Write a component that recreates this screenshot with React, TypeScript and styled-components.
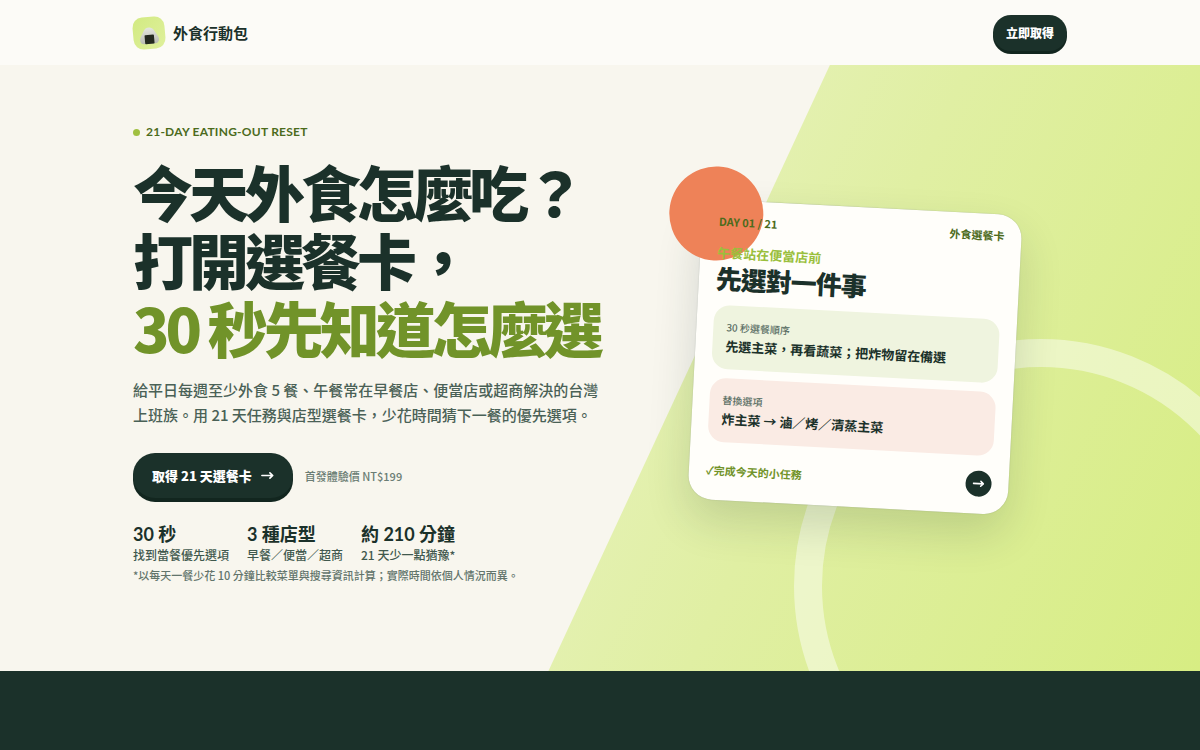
import React from 'react';
import styled, { createGlobalStyle } from 'styled-components';

const ink = '#1b312a';
const cjk = `'Noto Sans CJK TC', 'Noto Sans', sans-serif`;
const latin = `Lato, 'Noto Sans CJK TC', sans-serif`;

const GlobalStyle = createGlobalStyle`
  *, *::before, *::after { box-sizing: border-box; }
  body {
    margin: 0;
    background: ${ink};
    color: ${ink};
    font-family: ${cjk};
    -webkit-font-smoothing: antialiased;
  }
  h1, h2, p, dl, dt, dd { margin: 0; }
`;

const Container = styled.div`
  width: 100%;
  max-width: 974px;
  margin: 0 auto;
  padding: 0 20px;
`;

const Header = styled.header`
  background: #fcfbf7;
`;

const HeaderRow = styled(Container)`
  display: flex;
  align-items: center;
  justify-content: space-between;
  min-height: 65px;
`;

const Brand = styled.a`
  display: flex;
  align-items: center;
  gap: 8px;
  color: ${ink};
  font-size: 15px;
  font-weight: 700;
  line-height: 24px;
  text-decoration: none;
`;

const BrandMark = styled.span`
  display: grid;
  place-items: center;
  width: 32px;
  height: 32px;
  padding-top: 5px;
  border-radius: 10px;
  background: linear-gradient(135deg, #d2ea82, #dff09c);
  transform: rotate(-5deg);
`;

const PillLink = styled.a<{ $large?: boolean }>`
  display: inline-flex;
  align-items: center;
  gap: 9px;
  min-height: ${p => (p.$large ? 45 : 36)}px;
  padding: 0 ${p => (p.$large ? 19 : 13)}px;
  border-radius: ${p => (p.$large ? 22 : 18)}px;
  background: ${ink};
  box-shadow: 0 ${p => (p.$large ? 4 : 3)}px 0 #12261f;
  color: #fff;
  font-size: ${p => (p.$large ? 13 : 12)}px;
  font-weight: 900;
  line-height: 20px;
  text-decoration: none;
`;

const Hero = styled.section`
  position: relative;
  overflow: hidden;
  background: #f8f6ee;
`;

const Slope = styled.div`
  position: absolute;
  inset: 0 0 0 auto;
  width: 54.3%;
  overflow: hidden;
  background: linear-gradient(115deg, #e9f3c4 0%, #e0efa3 45%, #d7ed83 100%);
  clip-path: polygon(43.2% 0, 100% 0, 100% 100%, 0 100%);
`;

const Ring = styled.div`
  position: absolute;
  right: -88px;
  bottom: -162px;
  width: 494px;
  height: 494px;
  border: 28px solid rgba(255, 255, 255, 0.45);
  border-radius: 50%;
`;

const HeroGrid = styled(Container)`
  position: relative;
  display: grid;
  grid-template-columns: minmax(0, 1fr) 424px;
  gap: 44px;
  padding-top: 58px;
  padding-bottom: 86px;
`;

const Copy = styled.div`
  display: flex;
  flex-direction: column;
  align-items: flex-start;
`;

const Eyebrow = styled.p`
  display: flex;
  align-items: center;
  gap: 6px;
  color: #4c6b1c;
  font-family: ${latin};
  font-size: 12px;
  font-weight: 700;
  line-height: 18px;
  letter-spacing: 0.02em;
  &::before {
    content: '';
    width: 7px;
    height: 7px;
    border-radius: 50%;
    background: #a0c040;
  }
`;

const Title = styled.h1`
  margin-top: 16px;
  font-size: 60px;
  font-weight: 900;
  line-height: 68px;
  letter-spacing: -4px;
  white-space: nowrap;
`;

const Accent = styled.span`
  color: #719329;
`;

const Lead = styled.p`
  margin-top: 16px;
  color: #4a6156;
  font-size: 15px;
  font-weight: 500;
  line-height: 25px;
`;

const Actions = styled.div`
  display: flex;
  align-items: center;
  gap: 12px;
  margin-top: 26px;
`;

const Price = styled.span`
  color: #6b7d74;
  font-size: 11px;
  font-weight: 500;
  line-height: 16px;
`;

const Stats = styled.dl`
  display: flex;
  gap: 18px;
  margin-top: 25px;
`;

const Stat = styled.div`
  display: flex;
  flex-direction: column;
`;

const StatValue = styled.dt`
  font-family: ${latin};
  font-size: 18px;
  font-weight: 700;
  line-height: 22px;
`;

const StatLabel = styled.dd`
  color: #40584d;
  font-size: 12px;
  font-weight: 500;
  line-height: 20px;
`;

const Footnote = styled.p`
  color: #62746b;
  font-size: 11px;
  font-weight: 500;
  line-height: 20px;
`;

const Stage = styled.div`
  display: flex;
  justify-content: center;
  align-items: flex-start;
  padding-top: 84px;
`;

const Card = styled.article`
  width: 320px;
  padding: 13px 17px 17px;
  border-radius: 24px;
  background: #fffefa;
  box-shadow: 0 0 1px rgba(27, 49, 42, 0.3), 0 20px 44px rgba(27, 49, 42, 0.16);
  transform: rotate(3deg);
`;

/* Sits over the card's surface but under its text. */
const Sun = styled.div`
  position: absolute;
  z-index: -1;
  top: -33px;
  left: -33px;
  width: 94px;
  height: 94px;
  border-radius: 50%;
  background: #ee8258;
`;

const CardTop = styled.div`
  display: flex;
  justify-content: space-between;
  color: #4c6b1c;
  font-size: 11px;
  font-weight: 700;
  line-height: 16px;
`;

const CardKicker = styled.p`
  margin-top: 15px;
  color: #9abf3c;
  font-size: 13px;
  font-weight: 700;
  line-height: 18px;
`;

const CardTitle = styled.h2`
  margin-bottom: 11px;
  font-size: 26px;
  font-weight: 900;
  line-height: 32px;
  letter-spacing: -1px;
`;

const Tips = styled.div`
  display: grid;
  gap: 9px;
`;

const Tip = styled.section<{ $tone: 'green' | 'coral' }>`
  padding: 13px;
  border-radius: 16px;
  background: ${p => (p.$tone === 'green' ? '#eff4df' : '#faebe4')};
`;

const TipLabel = styled.p`
  color: #5c7066;
  font-size: 10px;
  font-weight: 500;
  line-height: 18px;
`;

const TipText = styled.p`
  font-size: 13px;
  font-weight: 700;
  line-height: 20px;
`;

const CardFoot = styled.div`
  display: flex;
  align-items: center;
  justify-content: space-between;
  margin-top: 15px;
  color: #719329;
  font-size: 11px;
  font-weight: 700;
  line-height: 16px;
`;

const NextButton = styled.button`
  display: grid;
  place-items: center;
  width: 26px;
  height: 26px;
  padding: 0;
  border: 0;
  border-radius: 50%;
  background: ${ink};
  color: #fff;
`;

const Band = styled.section`
  min-height: 79px;
  background: ${ink};
`;

const Arrow = ({ size }: { size: number }) => (
  <svg width={size} height={size} viewBox="0 0 14 14" fill="none" stroke="currentColor" strokeWidth="1.8" strokeLinecap="round" strokeLinejoin="round" aria-hidden="true">
    <path d="M1 7h11.5M9.6 4.1 12.6 7l-3 2.900" />
  </svg>
);

const RiceBall = () => (
  <svg width="20" height="18" viewBox="0 0 20 18" aria-hidden="true">
    <defs>
      <linearGradient id="rice" x1="0" y1="0" x2="0" y2="1">
        <stop offset="0" stopColor="#e4e6df" />
        <stop offset="1" stopColor="#b9bcb2" />
      </linearGradient>
    </defs>
    <path d="M10 .6c2.400 0 3.900 1 5.400 3.400l3.300 5.800c1.700 3.200.4 7-3 7H4.300c-3.400 0-4.700-3.800-3-7L4.600 4C6.100 1.600 7.600.6 10 .6Z" fill="url(#rice)" />
    <rect x="5.300" y="7.800" width="9.400" height="9.200" rx=".8" fill="#23291f" />
  </svg>
);

const stats = [
  { value: '30 秒', label: '找到當餐優先選項' },
  { value: '3 種店型', label: '早餐／便當／超商' },
  { value: '約 210 分鐘', label: '21 天少一點猶豫*' },
];

export default function App() {
  return (
    <>
      <GlobalStyle />
      <Header>
        <HeaderRow>
          <Brand href="#top">
            <BrandMark><RiceBall /></BrandMark>
            外食行動包
          </Brand>
          <PillLink href="#buy">立即取得</PillLink>
        </HeaderRow>
      </Header>
      <main>
        <Hero>
          <Slope><Ring /></Slope>
          <HeroGrid>
            <Copy>
              <Eyebrow>21-DAY EATING-OUT RESET</Eyebrow>
              <Title>
                今天外食怎麼吃？<br />
                打開選餐卡，<br />
                <Accent>30 秒先知道怎麼選</Accent>
              </Title>
              <Lead>
                給平日每週至少外食 5 餐、午餐常在早餐店、便當店或超商解決的台灣上班族。用 21 天任務與店型選餐卡，少花時間猜下一餐的優先選項。
              </Lead>
              <Actions>
                <PillLink href="#buy" $large>取得 21 天選餐卡 <Arrow size={13} /></PillLink>
                <Price>首發體驗價 NT$199</Price>
              </Actions>
              <Stats>
                {stats.map(s => (
                  <Stat key={s.value}>
                    <StatValue>{s.value}</StatValue>
                    <StatLabel>{s.label}</StatLabel>
                  </Stat>
                ))}
              </Stats>
              <Footnote>*以每天一餐少花 10 分鐘比較菜單與搜尋資訊計算；實際時間依個人情況而異。</Footnote>
            </Copy>
            <Stage>
              <Card>
                <Sun />
                <CardTop><span>DAY 01 / 21</span><span>外食選餐卡</span></CardTop>
                <CardKicker>午餐站在便當店前</CardKicker>
                <CardTitle>先選對一件事</CardTitle>
                <Tips>
                  <Tip $tone="green">
                    <TipLabel>30 秒選餐順序</TipLabel>
                    <TipText>先選主菜，再看蔬菜；把炸物留在備選</TipText>
                  </Tip>
                  <Tip $tone="coral">
                    <TipLabel>替換選項</TipLabel>
                    <TipText>炸主菜 → 滷／烤／清蒸主菜</TipText>
                  </Tip>
                </Tips>
                <CardFoot>
                  <span>✓完成今天的小任務</span>
                  <NextButton type="button" aria-label="下一步"><Arrow size={12} /></NextButton>
                </CardFoot>
              </Card>
            </Stage>
          </HeroGrid>
        </Hero>
        <Band />
      </main>
    </>
  );
}
